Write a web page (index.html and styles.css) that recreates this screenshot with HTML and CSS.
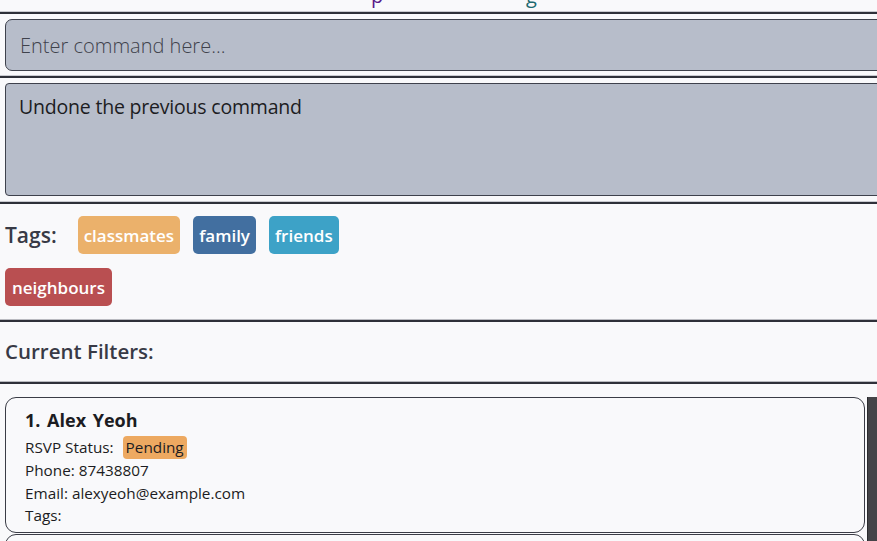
FILE: index.html
```html
<!DOCTYPE html>
<html>
<head>
<meta charset="utf-8">
<link rel="stylesheet" href="styles.css">
</head>
<body>
<div class="app">
  <div class="title-strip"><span class="frag-p">p</span><span class="frag-g">g</span></div>
  <div class="divider"></div>
  <div class="command-pane">
    <div class="command-box">Enter command here...</div>
  </div>
  <div class="divider"></div>
  <div class="result-pane">
    <div class="result-box">Undone the previous command</div>
  </div>
  <div class="divider"></div>
  <div class="tags-pane">
    <span class="tags-label">Tags:</span>
    <span class="chip chip-classmates">classmates</span>
    <span class="chip chip-family">family</span>
    <span class="chip chip-friends">friends</span>
    <span class="chip chip-neighbours">neighbours</span>
  </div>
  <div class="divider thick"></div>
  <div class="filters-pane">Current Filters:</div>
  <div class="divider thick"></div>
  <div class="list-pane">
    <div class="list">
      <div class="card">
        <div class="name">1. Alex Yeoh</div>
        <div class="line">RSVP Status: <span class="rsvp">Pending</span></div>
        <div class="line">Phone: 87438807</div>
        <div class="line">Email: alexyeoh@example.com</div>
        <div class="line">Tags:</div>
      </div>
      <div class="card"></div>
    </div>
    <div class="scrollbar"></div>
  </div>
</div>
</body>
</html>
```
FILE: styles.css
```css
html, body {
  margin: 0;
  padding: 0;
  background: #f9f9fb;
  overflow: hidden;
}
body {
  width: 877px;
  height: 541px;
  font-family: "Open Sans", "Noto Sans", sans-serif;
  color: #1c1c22;
}
.app {
  display: flex;
  flex-direction: column;
  height: 541px;
  overflow: hidden;
}
.title-strip {
  height: 11px;
  overflow: hidden;
  position: relative;
  font-size: 20px;
  line-height: 20px;
}
.frag-p, .frag-g {
  position: absolute;
  top: -14px;
}
.frag-p { left: 371px; color: #5a1a8a; }
.frag-g { left: 526px; color: #1f6a70; }
.divider {
  height: 2px;
  background: #2e3039;
  border-top: 1px solid #c9cad0;
  flex: none;
}
.divider.thick {
  height: 2px;
  border-top: 1px solid #b9bac0;
}
.command-pane {
  padding: 5px 0 4px 5px;
  overflow: hidden;
}
.command-box {
  box-sizing: border-box;
  height: 52px;
  margin-right: -20px;
  background: #b7bdca;
  border: 1px solid #3e414c;
  border-radius: 7px;
  padding: 0 14px;
  display: flex;
  align-items: center;
  font-size: 20px;
  font-weight: 300;
  color: #3f424c;
}
.result-pane {
  padding: 5px 0 5px 5px;
  overflow: hidden;
}
.result-box {
  box-sizing: border-box;
  height: 113px;
  margin-right: -20px;
  background: #b7bdca;
  border: 1px solid #3e414c;
  border-radius: 4px;
  padding: 9px 13px;
  font-size: 19.5px;
  letter-spacing: -0.2px;
  color: #1c1c22;
}
.tags-pane {
  box-sizing: border-box;
  height: 115px;
  width: 420px;
  padding: 12px 0 0 5px;
  display: flex;
  flex-wrap: wrap;
  align-content: flex-start;
  align-items: center;
  column-gap: 13px;
  row-gap: 14px;
}
.tags-label {
  font-size: 21px;
  font-weight: 600;
  color: #383a46;
  margin-right: 8px;
}
.chip {
  height: 38px;
  display: inline-flex;
  align-items: center;
  padding: 0 6px;
  border-radius: 5px;
  color: #ffffff;
  font-size: 17px;
  font-weight: 600;
}
.chip-classmates { background: #ebb16b; }
.chip-family { background: #426fa0; }
.chip-friends { background: #3da2c7; }
.chip-neighbours { background: #b94f51; padding: 0 7px; }
.filters-pane {
  box-sizing: border-box;
  height: 59px;
  display: flex;
  align-items: center;
  padding: 0 0 2px 5px;
  font-size: 20.5px;
  font-weight: 600;
  color: #383a46;
}
.list-pane {
  flex: 1;
  display: flex;
  padding: 13px 0 0 5px;
  gap: 2px;
  min-height: 0;
}
.list {
  flex: 1;
  display: flex;
  flex-direction: column;
  gap: 1px;
}
.card {
  box-sizing: border-box;
  height: 136px;
  flex: none;
  border: 1px solid #3a3c46;
  border-radius: 11px;
  padding: 9px 19px;
  background: #f9f9fb;
}
.name {
  font-size: 18px;
  font-weight: 700;
  line-height: 26px;
  margin-bottom: 3px;
  word-spacing: 2px;
}
.line {
  font-size: 15.3px;
  line-height: 22.5px;
}
.rsvp {
  display: inline-block;
  background: #eda961;
  border-radius: 4px;
  padding: 0 3px;
  margin-left: 5px;
  line-height: 23px;
}
.scrollbar {
  width: 9px;
  background: #444448;
  border-left: 1px solid #2a2a2e;
}
```
